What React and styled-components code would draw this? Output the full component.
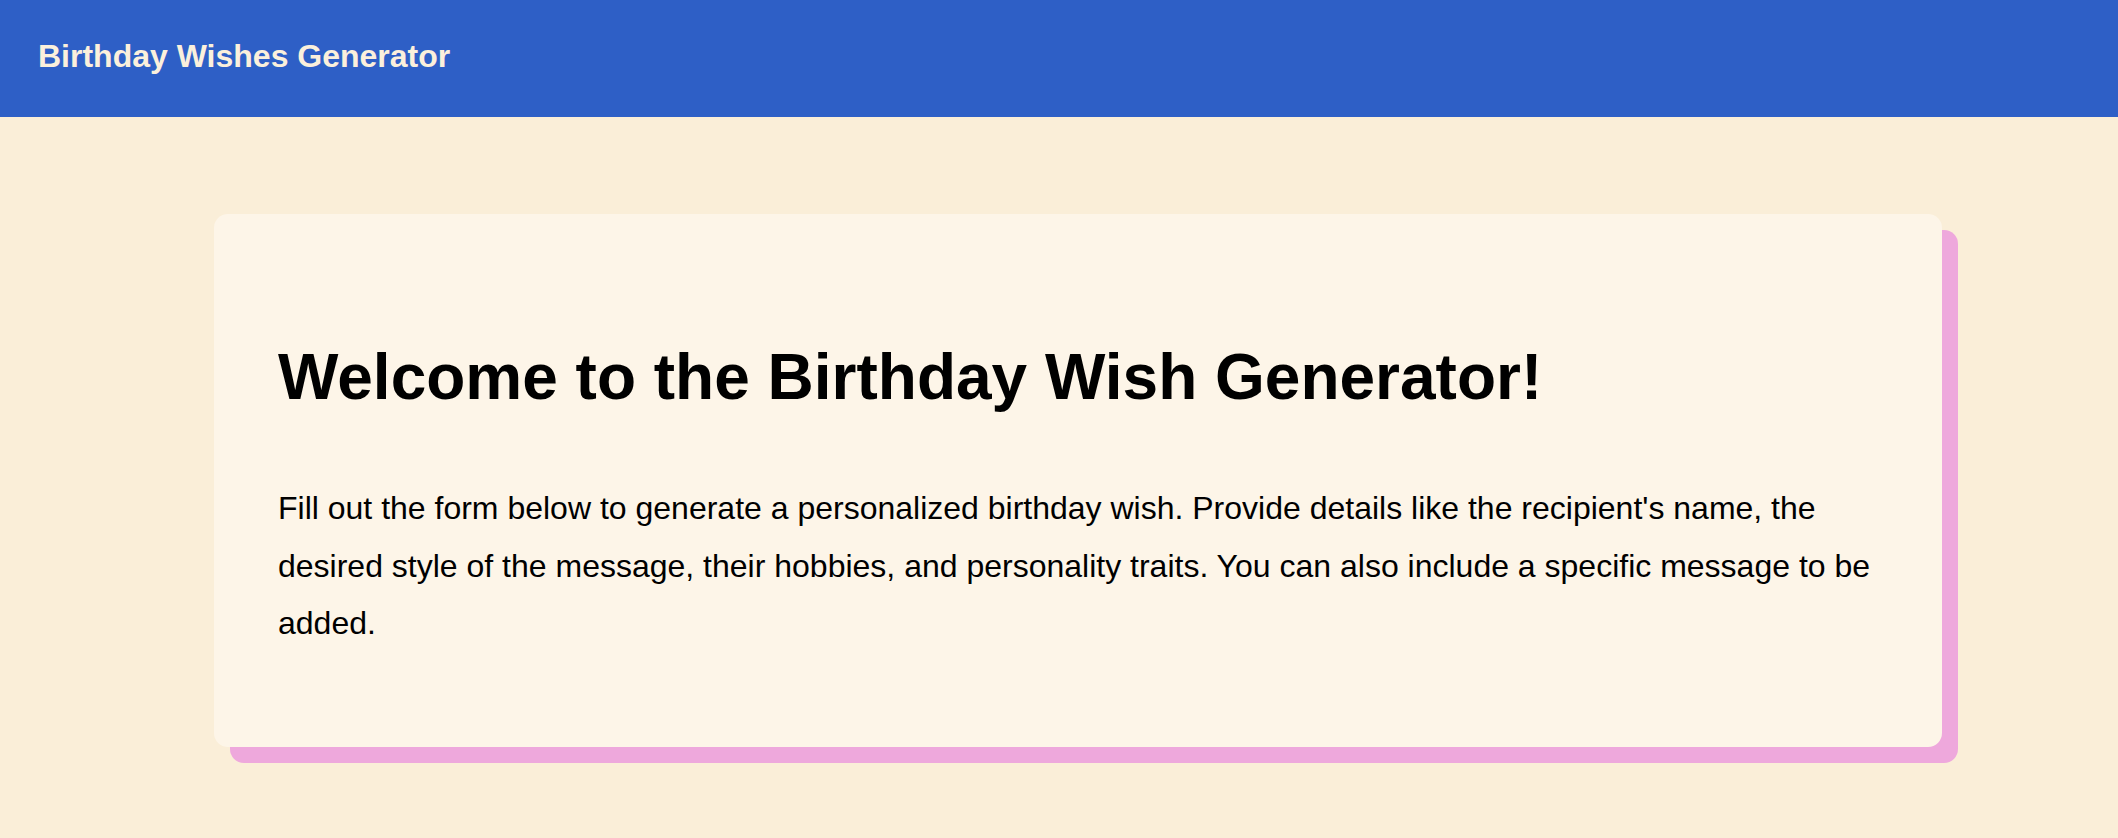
import React from "react";
import styled, { createGlobalStyle } from "styled-components";

const GlobalStyle = createGlobalStyle`
  html, body {
    margin: 0;
    padding: 0;
    background: #faeed8;
    font-family: "Liberation Sans", Arial, Helvetica, sans-serif;
  }
  * { box-sizing: border-box; }
`;

const Page = styled.div`
  min-height: 838px;
  background: #faeed8;
  display: flex;
  flex-direction: column;
`;

const Header = styled.header`
  height: 117px;
  background: #2e5fc6;
  display: flex;
  align-items: flex-start;
  padding: 38px 38px 0;
`;

const Brand = styled.h1`
  margin: 0;
  font-size: 32px;
  font-weight: 700;
  color: #fbf0dc;
  line-height: normal;
`;

const Main = styled.main`
  padding: 97px 176px 76px 214px;
`;

const Card = styled.section`
  background: #fdf5e8;
  border-radius: 14px;
  box-shadow: 16px 16px 0 #eea8dc;
  padding: 126px 64px 94px;
`;

const Title = styled.h2`
  margin: 0 0 66px;
  font-size: 64px;
  font-weight: 700;
  color: #000;
  line-height: normal;
`;

const Intro = styled.p`
  margin: 0;
  font-size: 32px;
  line-height: 1.8;
  color: #000;
`;

export default function App() {
  return (
    <Page>
      <GlobalStyle />
      <Header>
        <Brand>Birthday Wishes Generator</Brand>
      </Header>
      <Main>
        <Card>
          <Title>Welcome to the Birthday Wish Generator!</Title>
          <Intro>
            Fill out the form below to generate a personalized birthday wish.
            Provide details like the recipient's name, the desired style of the
            message, their hobbies, and personality traits. You can also include
            a specific message to be added.
          </Intro>
        </Card>
      </Main>
    </Page>
  );
}
